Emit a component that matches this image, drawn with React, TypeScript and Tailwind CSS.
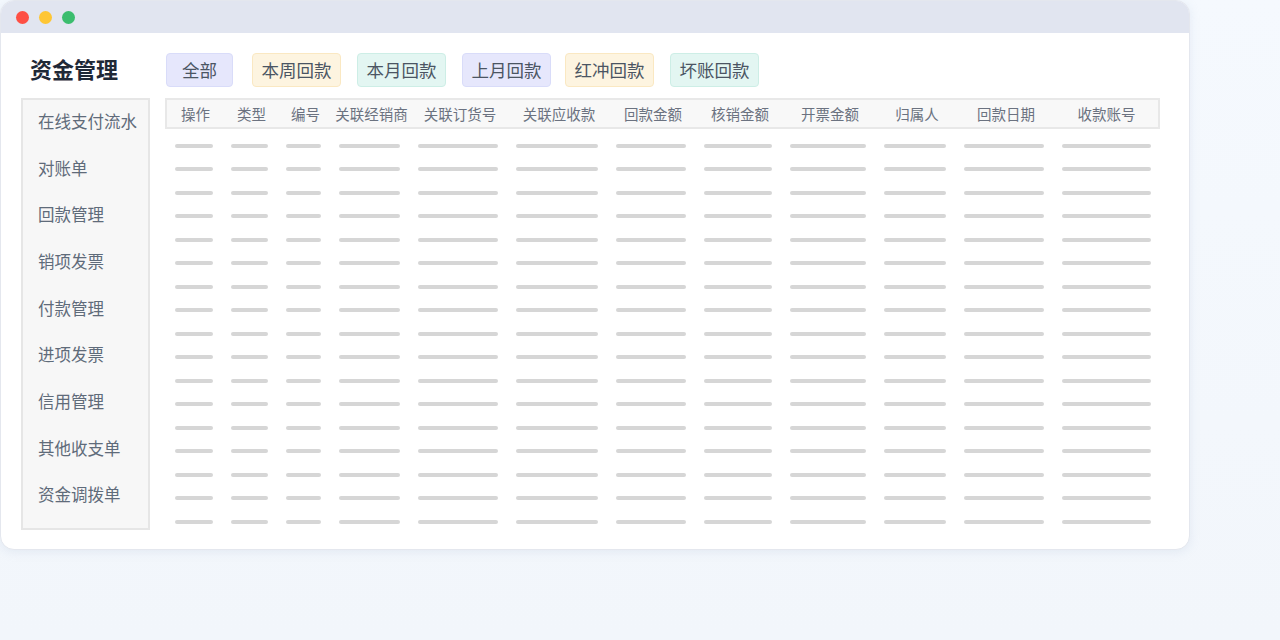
const tabs = [
  { label: "全部", cls: "bg-[#e6e7fc] border-[#d9dcf9] w-[67px]" },
  { label: "本周回款", cls: "bg-[#fdf4e0] border-[#fae8c2] w-[89px] ml-[19px]" },
  { label: "本月回款", cls: "bg-[#e3f6f2] border-[#cdeee6] w-[89px] ml-[16px]" },
  { label: "上月回款", cls: "bg-[#e6e7fc] border-[#d9dcf9] w-[89px] ml-[16px]" },
  { label: "红冲回款", cls: "bg-[#fdf4e0] border-[#fae8c2] w-[89px] ml-[14px]" },
  { label: "坏账回款", cls: "bg-[#e3f6f2] border-[#cdeee6] w-[89px] ml-[16px]" },
];

const menu = [
  "在线支付流水",
  "对账单",
  "回款管理",
  "销项发票",
  "付款管理",
  "进项发票",
  "信用管理",
  "其他收支单",
  "资金调拨单",
];

const columns = [
  "操作",
  "类型",
  "编号",
  "关联经销商",
  "关联订货号",
  "关联应收款",
  "回款金额",
  "核销金额",
  "开票金额",
  "归属人",
  "回款日期",
  "收款账号",
];

const rows = Array.from({ length: 17 }, (_, i) => i);

const grid =
  "grid grid-cols-[57px_55px_53px_79px_98px_100px_88px_86px_94px_80px_98px_1fr]";

export default function App() {
  return (
    <div
      className="w-[1280px] h-[640px] bg-gradient-to-b from-[#f5f9fe] to-[#f2f6fb] overflow-hidden"
      style={{ fontFamily: '"Noto Sans CJK SC", "Noto Sans", sans-serif' }}
    >
      <div className="w-[1190px] h-[550px] bg-white rounded-[14px] border border-[#e4e7ee] shadow-[0_2px_10px_rgba(180,195,220,0.25)] overflow-hidden flex flex-col">
        {/* title bar */}
        <div className="h-[32px] bg-[#e1e5f0] flex items-center gap-[10px] pl-[15px] shrink-0">
          <span className="w-[13px] h-[13px] rounded-full bg-[#fe4f44]" />
          <span className="w-[13px] h-[13px] rounded-full bg-[#fec634]" />
          <span className="w-[13px] h-[13px] rounded-full bg-[#3bbd6e]" />
        </div>

        <div className="flex-1 pl-[20px] pt-[20px]">
          {/* heading + tabs */}
          <div className="flex items-center h-[34px]">
            <h1 className="w-[145px] pl-[9px] mb-[4px] text-[22px] font-bold text-[#1f2937] leading-none">
              资金管理
            </h1>
            <div className="flex">
              {tabs.map((t) => (
                <div
                  key={t.label}
                  className={`h-[34px] rounded-[4px] border flex items-center justify-center text-[17.5px] text-[#4b5563] ${t.cls}`}
                >
                  {t.label}
                </div>
              ))}
            </div>
          </div>

          <div className="flex gap-[15px] mt-[11px]">
            {/* side menu */}
            <div className="w-[129px] h-[432px] bg-[#f7f7f7] border-2 border-[#e6e6e6]">
              <div className="-mt-[2px]">
                {menu.map((m) => (
                  <div
                    key={m}
                    className="h-[46.7px] flex items-center pl-[15px] text-[16.5px] text-[#5f6b7a]"
                  >
                    {m}
                  </div>
                ))}
              </div>
            </div>

            {/* table */}
            <div className="w-[995px]">
              <div
                className={`${grid} h-[31px] items-center bg-[#f8f8f8] border-2 border-[#e8e8e8] text-[14.5px] text-[#6b7280]`}
              >
                {columns.map((c) => (
                  <div key={c} className="text-center whitespace-nowrap">
                    {c}
                  </div>
                ))}
              </div>
              <div className="mt-[5px]">
                {rows.map((r) => (
                  <div key={r} className={`${grid} h-[23.5px] items-center`}>
                    {columns.map((c, i) => (
                      <div key={c} className={i === 0 ? "pl-[10px] pr-[9px]" : "px-[9px]"}>
                        <div className="h-[4px] rounded-full bg-[#d6d6d6]" />
                      </div>
                    ))}
                  </div>
                ))}
              </div>
            </div>
          </div>
        </div>
      </div>
    </div>
  );
}
